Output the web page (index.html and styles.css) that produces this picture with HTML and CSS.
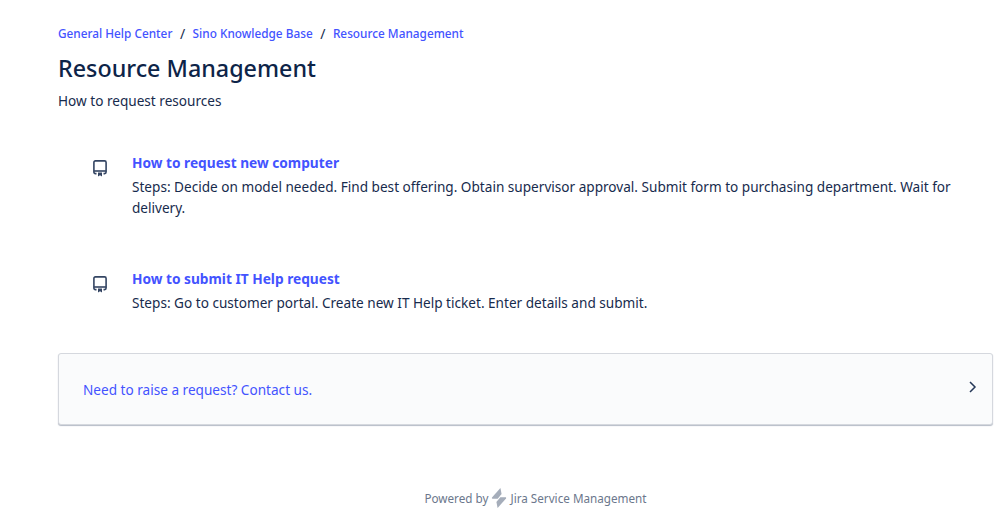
FILE: index.html
```html
<!DOCTYPE html>
<html lang="en">
<head>
<meta charset="utf-8">
<title>Resource Management</title>
<link rel="stylesheet" href="styles.css">
</head>
<body>
<main class="page">
  <nav class="crumbs">
    <a href="#">General Help Center</a><span class="sep">/</span>
    <a href="#">Sino Knowledge Base</a><span class="sep">/</span>
    <a href="#">Resource Management</a>
  </nav>
  <h1 class="title">Resource Management</h1>
  <p class="subtitle">How to request resources</p>
  <ul class="articles">
    <li class="article">
      <svg class="doc" viewBox="0 0 14 17" width="14" height="17" fill="none" stroke="#344563" stroke-width="1.6"><path d="M3.5 13.6H2.4C1.5 13.6.9 13 .9 12.1V2.4C.9 1.5 1.5.9 2.4.9h9.2c.9 0 1.5.6 1.5 1.5v9.7c0 .9-.6 1.5-1.5 1.5h-1.1"/><path d="M.9 11h12.2"/><path d="M5 12.6h4v4l-2-1.3-2 1.3z" fill="#344563" stroke="none"/></svg>
      <div class="body">
        <a class="art-title" href="#">How to request new computer</a>
        <p class="art-text">Steps: Decide on model needed. Find best offering. Obtain supervisor approval. Submit form to purchasing department. Wait for delivery.</p>
      </div>
    </li>
    <li class="article">
      <svg class="doc" viewBox="0 0 14 17" width="14" height="17" fill="none" stroke="#344563" stroke-width="1.6"><path d="M3.5 13.6H2.4C1.5 13.6.9 13 .9 12.1V2.4C.9 1.5 1.5.9 2.4.9h9.2c.9 0 1.5.6 1.5 1.5v9.7c0 .9-.6 1.5-1.5 1.5h-1.1"/><path d="M.9 11h12.2"/><path d="M5 12.6h4v4l-2-1.3-2 1.3z" fill="#344563" stroke="none"/></svg>
      <div class="body">
        <a class="art-title" href="#">How to submit IT Help request</a>
        <p class="art-text">Steps: Go to customer portal. Create new IT Help ticket. Enter details and submit.</p>
      </div>
    </li>
  </ul>
  <a class="contact" href="#">
    <span class="contact-text">Need to raise a request? Contact us.</span>
    <svg class="chev" viewBox="0 0 10 14" width="10" height="14" fill="none" stroke="#253858" stroke-width="1.5"><path d="M2 2l5 5-5 5"/></svg>
  </a>
  <footer class="foot">
    <span>Powered by</span>
    <svg class="bolt" viewBox="0 0 16 20" width="16" height="20"><path d="M9.4 0 1 9.6c-.4.5 0 1.1.5 1.1h5.2L10.6 6z" fill="#a5adba"/><path d="M6.6 20 15 10.4c.4-.5 0-1.1-.5-1.1H9.3L5.4 14z" fill="#a5adba"/></svg>
    <span>Jira Service Management</span>
  </footer>
</main>
</body>
</html>
```
FILE: styles.css
```css
* { box-sizing: border-box; }
html, body { margin: 0; padding: 0; background: #fff; }
body { font-family: "Noto Sans", sans-serif; color: #172b4d; font-size: 13.6px; overflow: hidden; }
.page { height: 514px; padding: 24px 6px 0 58px; display: flex; flex-direction: column; }
.crumbs { display: flex; align-items: center; height: 18px; font-size: 11.8px; font-weight: 500; }
.crumbs a { color: #4353ff; text-decoration: none; }
.sep { margin: 0 7.5px; font-size: 14px; color: #172b4d; font-weight: 400; }
.title { margin: 9px 0 0; font-size: 23.3px; line-height: 34px; font-weight: 500; color: #0d2448; }
.subtitle { margin: 6px 0 0; line-height: 20px; }
.articles { list-style: none; margin: 41px 0 0; padding: 0; display: flex; flex-direction: column; gap: 50px; }
.article { display: flex; padding: 0 40px 0 35px; }
.doc { margin-top: 8px; flex: none; }
.body { margin-left: 25px; }
.art-title { display: block; font-size: 13.7px; line-height: 22px; font-weight: 700; color: #4353ff; text-decoration: none; }
.art-text { margin: 2px 0 0; line-height: 21px; }
.contact { flex: none; display: flex; justify-content: space-between; align-items: center; height: 72px; margin-top: 40px; padding: 0 14px 0 24px; border: 1px solid #d5d8de; border-radius: 3px; background: #fafbfc; box-shadow: 0 1px 1px rgba(9,30,66,.3); color: #4353ff; text-decoration: none; }
.contact-text { margin-top: 1px; }
.chev { margin-top: -4px; }
.foot { flex: none; display: flex; justify-content: center; align-items: center; gap: 3px; margin: 63px 0 0 20px; font-size: 11.7px; color: #6b778c; }
```
